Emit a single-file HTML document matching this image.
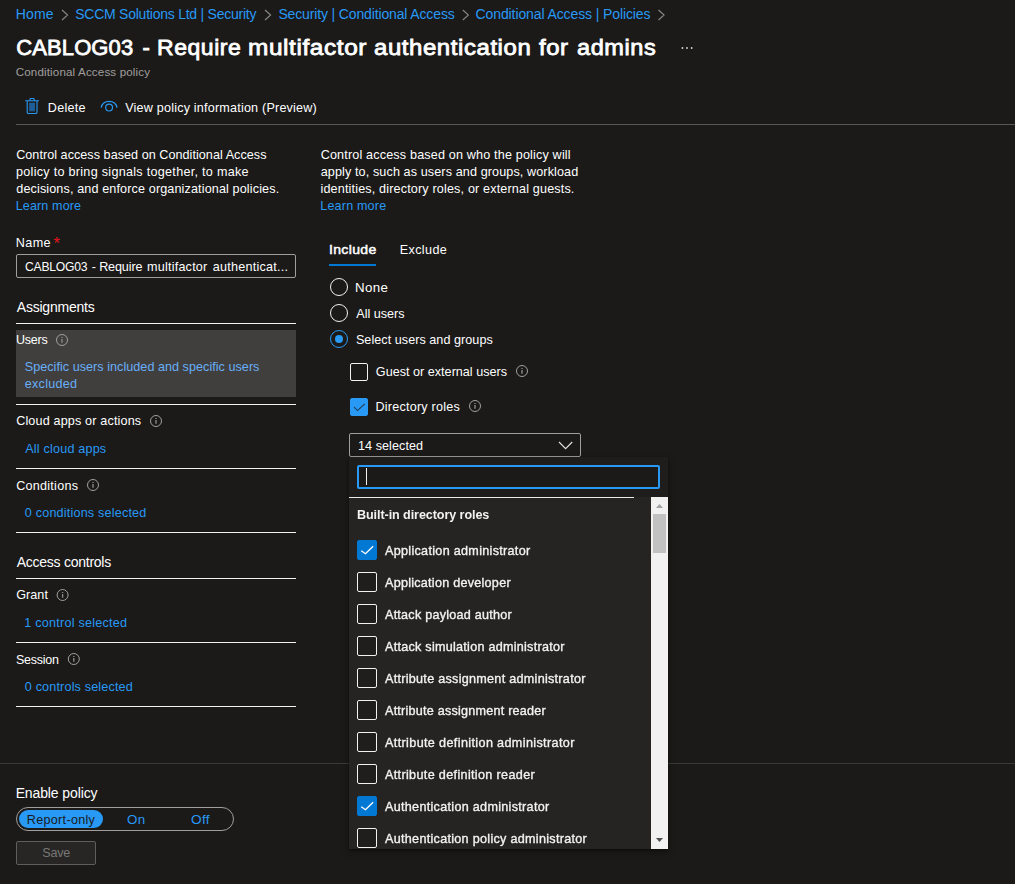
<!DOCTYPE html>
<html lang="en"><head><meta charset="utf-8"><title>Conditional Access policy</title>
<style>
html,body{margin:0;padding:0;background:#1b1a19;}
body{width:1015px;height:884px;position:relative;overflow:hidden;font-family:"Liberation Sans",sans-serif;color:#fff;}
.t{position:absolute;white-space:nowrap;z-index:5;}
.a{position:absolute;box-sizing:border-box;}
.wl{position:absolute;left:16px;width:280px;height:1px;background:#f3f2f1;}
.rad{position:absolute;box-sizing:border-box;width:18px;height:18px;border-radius:50%;border:1px solid #f3f2f1;left:330px;}
.cb{position:absolute;box-sizing:border-box;width:18px;height:18px;border-radius:2px;border:1px solid #f3f2f1;left:350px;}
.lcb{position:absolute;box-sizing:border-box;width:20px;height:20px;border-radius:2px;border:1px solid #f3f2f1;left:357px;background:#1f1e1d;}
.lcb.on{background:#0078d4;border-color:#0078d4;}
svg{position:absolute;overflow:visible;}

</style></head>
<body>
<!-- breadcrumb chevrons -->
<svg style="left:0;top:0" width="700" height="30" fill="none" stroke="#8a8886" stroke-width="1.1">
<path d="M62 10l5.600 5-5.600 5M265 10l5.600 5-5.600 5M462.800 10l5.600 5-5.600 5M658.500 10l5.600 5-5.600 5"/>
</svg>
<!-- title ellipsis -->
<svg style="left:680px;top:44px" width="16" height="8" fill="#c8c6c4"><rect x="1.700" y="3" width="1.500" height="2"/><rect x="6.250" y="3" width="1.500" height="2"/><rect x="10.900" y="3" width="1.500" height="2"/></svg>
<!-- toolbar icons -->
<svg style="left:24px;top:97px" width="17" height="18" fill="none" stroke="#2899f5" stroke-width="1.1">
<path d="M1.2 3.8h13.8M6 3.6V2.2a.7.7 0 0 1 .7-.7h2.8a.7.7 0 0 1 .7.7v1.4M3.2 4v11.2a1.3 1.3 0 0 0 1.3 1.3h7.2a1.3 1.3 0 0 0 1.3-1.3V4"/>
<rect x="5.100" y="5.700" width="5.900" height="8.600" fill="#1d5c96" stroke="none"/>
</svg>
<svg style="left:100px;top:98.500px" width="18" height="14" fill="none" stroke="#2899f5" stroke-width="1.2">
<path d="M1.2 8.6C2 4.6 5.2 2.4 9.1 2.4s7.100 2.200 7.900 6.200"/><circle cx="9.1" cy="8.600" r="3.4"/>
</svg>
<div class="a" style="left:16px;top:124px;width:999px;height:1px;background:#5a5856"></div>

<!-- name input -->
<div class="a" style="left:16px;top:254px;width:280px;height:24px;border:1px solid #a19f9d;border-radius:2px;"></div>
<!-- section lines -->
<div class="wl" style="top:323px"></div>
<div class="a" style="left:16px;top:330px;width:280px;height:67px;background:#403f3d"></div>
<div class="wl" style="top:404px"></div>
<div class="wl" style="top:468px"></div>
<div class="wl" style="top:532px"></div>
<div class="wl" style="top:578px"></div>
<div class="wl" style="top:642px"></div>
<div class="wl" style="top:706px"></div>

<!-- info icons -->
<svg style="left:0;top:0" width="600" height="700" fill="none" stroke="#a19f9d" stroke-width="1">
<g><circle cx="62" cy="340" r="5.500"/><path d="M62 337.100v.9M62 339v3.800" stroke="#8a8886" stroke-width="1.4"/></g>
<g transform="translate(94,81)"><circle cx="62" cy="340" r="5.500"/><path d="M62 337.100v.9M62 339v3.800" stroke="#8a8886" stroke-width="1.4"/></g>
<g transform="translate(31,145)"><circle cx="62" cy="340" r="5.500"/><path d="M62 337.100v.9M62 339v3.800" stroke="#8a8886" stroke-width="1.4"/></g>
<g transform="translate(0.600,255)"><circle cx="62" cy="340" r="5.500"/><path d="M62 337.100v.9M62 339v3.800" stroke="#8a8886" stroke-width="1.4"/></g>
<g transform="translate(11.800,319)"><circle cx="62" cy="340" r="5.500"/><path d="M62 337.100v.9M62 339v3.800" stroke="#8a8886" stroke-width="1.4"/></g>
<g transform="translate(460,31)"><circle cx="62" cy="340" r="5.500"/><path d="M62 337.100v.9M62 339v3.800" stroke="#8a8886" stroke-width="1.4"/></g>
<g transform="translate(413,66)"><circle cx="62" cy="340" r="5.500"/><path d="M62 337.100v.9M62 339v3.800" stroke="#8a8886" stroke-width="1.4"/></g>
</svg>

<!-- footer -->
<div class="a" style="left:0;top:763px;width:1015px;height:1px;background:#3b3a39"></div>
<div class="a" style="left:16px;top:807px;width:218px;height:24px;border:1px solid #a19f9d;border-radius:12px;"></div>
<div class="a" style="left:19px;top:810px;width:84px;height:18px;background:#2899f5;border-radius:9px;"></div>
<div class="a" style="left:16px;top:841px;width:80px;height:24px;border:1px solid #605e5c;background:#272625;border-radius:2px;"></div>

<!-- tabs -->
<div class="a" style="left:329px;top:264px;width:47px;height:2px;background:#0078d4"></div>
<!-- radios -->
<div class="rad" style="top:278px"></div>
<div class="rad" style="top:304px"></div>
<div class="rad" style="top:330px;border-color:#2899f5"></div>
<div class="a" style="left:334.800px;top:334.800px;width:8.400px;height:8.400px;border-radius:50%;background:#2899f5"></div>
<!-- checkboxes -->
<div class="cb" style="top:363px"></div>
<div class="cb" style="top:398px;background:#2899f5;border-color:#2899f5"></div>
<svg style="left:350px;top:398px" width="18" height="18" fill="none" stroke="#1b3a57" stroke-width="1.05"><path d="M4.100 9.200L7.600 12.600L14.700 5.800"/></svg>
<!-- dropdown -->
<div class="a" style="left:349px;top:433px;width:232px;height:24px;border:1px solid #a19f9d;border-radius:2px;"></div>
<svg style="left:556px;top:438px" width="20" height="14" fill="none" stroke="#e1dfdd" stroke-width="1.2"><path d="M3 4l6.600 6.600L16.200 4"/></svg>

<!-- flyout -->
<div class="a" style="left:349px;top:457px;width:319px;height:392px;background:#252423;box-shadow:0 3px 7px rgba(0,0,0,.35),0 1px 2px rgba(0,0,0,.3);"></div>
<div class="a" style="left:349px;top:457px;width:319px;height:40px;background:#1e1d1c;"></div>
<div class="a" style="left:357px;top:465px;width:303px;height:24px;border:2px solid #2899f5;border-radius:2px;background:#1b1a19"></div>
<div class="a" style="left:366px;top:468px;width:1px;height:17px;background:#f3f2f1"></div>
<div class="a" style="left:349px;top:497px;width:285px;height:1px;background:#edebe9"></div>
<!-- scrollbar -->
<div class="a" style="left:651px;top:497px;width:17px;height:352px;background:#f1f1f1"></div>
<div class="a" style="left:653px;top:514px;width:13px;height:39px;background:#c1c1c1"></div>
<svg style="left:651px;top:497px" width="17" height="352"><path d="M5 11h7l-3.500-4z" fill="#a3a3a3"/><path d="M5 341h7l-3.500 4z" fill="#505050"/></svg>
<!-- list checkboxes -->
<div class="lcb on" style="top:540px"></div>
<div class="lcb" style="top:572px"></div>
<div class="lcb" style="top:604px"></div>
<div class="lcb" style="top:636px"></div>
<div class="lcb" style="top:668px"></div>
<div class="lcb" style="top:700px"></div>
<div class="lcb" style="top:732px"></div>
<div class="lcb" style="top:764px"></div>
<div class="lcb on" style="top:796px"></div>
<div class="lcb" style="top:828px"></div>
<svg style="left:357px;top:540px" width="20" height="20" fill="none" stroke="#fff" stroke-width="1.3"><path d="M4.200 10.800l4.300 2.900 7.600-7.500"/></svg>
<svg style="left:357px;top:796px" width="20" height="20" fill="none" stroke="#fff" stroke-width="1.3"><path d="M4.200 10.800l4.300 2.900 7.600-7.500"/></svg>

<span class="t" id="t0" style="left:15.65px;top:5.00px;font-size:14px;line-height:18px;color:#2899f5;letter-spacing:0.204px;">Home</span>
<span class="t" id="t1" style="left:75.16px;top:5.00px;font-size:14px;line-height:18px;color:#2899f5;letter-spacing:-0.239px;">SCCM Solutions Ltd | Security</span>
<span class="t" id="t2" style="left:278.41px;top:5.00px;font-size:14px;line-height:18px;color:#2899f5;letter-spacing:-0.141px;">Security | Conditional Access</span>
<span class="t" id="t3" style="left:475.59px;top:5.00px;font-size:14px;line-height:18px;color:#2899f5;letter-spacing:-0.108px;">Conditional Access | Policies</span>
<span class="t" id="t4" style="left:16.28px;top:33.00px;font-size:22px;line-height:29px;letter-spacing:0.102px;-webkit-text-stroke:0.8px #fff;">CABLOG03</span>
<span class="t" id="t5" style="left:142.42px;top:33.00px;font-size:22px;line-height:29px;letter-spacing:0.000px;-webkit-text-stroke:0.8px #fff;">-</span>
<span class="t" id="t6" style="left:157.30px;top:33.00px;font-size:22px;line-height:29px;letter-spacing:0.524px;transform:scaleX(1.0448);transform-origin:0 0;-webkit-text-stroke:0.8px #fff;">Require</span>
<span class="t" id="t7" style="left:247.74px;top:33.00px;font-size:22px;line-height:29px;letter-spacing:0.524px;transform:scaleX(1.1097);transform-origin:0 0;-webkit-text-stroke:0.8px #fff;">multifactor</span>
<span class="t" id="t8" style="left:373.97px;top:33.00px;font-size:22px;line-height:29px;letter-spacing:0.524px;transform:scaleX(1.0901);transform-origin:0 0;-webkit-text-stroke:0.8px #fff;">authentication</span>
<span class="t" id="t9" style="left:539.39px;top:33.00px;font-size:22px;line-height:29px;letter-spacing:0.524px;transform:scaleX(1.0876);transform-origin:0 0;-webkit-text-stroke:0.8px #fff;">for</span>
<span class="t" id="t10" style="left:576.67px;top:33.00px;font-size:22px;line-height:29px;letter-spacing:0.524px;transform:scaleX(1.0706);transform-origin:0 0;-webkit-text-stroke:0.8px #fff;">admins</span>
<span class="t" id="t11" style="left:15.71px;top:64.00px;font-size:11.6px;line-height:15px;color:#a19f9d;letter-spacing:0.145px;">Conditional Access policy</span>
<span class="t" id="t12" style="left:47.77px;top:100.00px;font-size:12.6px;line-height:16px;letter-spacing:0.277px;">Delete</span>
<span class="t" id="t13" style="left:125.24px;top:100.00px;font-size:12.6px;line-height:16px;letter-spacing:0.196px;">View policy information (Preview)</span>
<span class="t" id="t14" style="left:16.16px;top:147.00px;font-size:12.6px;line-height:16px;letter-spacing:0.043px;">Control access based on Conditional Access</span>
<span class="t" id="t15" style="left:15.99px;top:164.00px;font-size:12.6px;line-height:16px;letter-spacing:0.284px;">policy to bring signals together, to make</span>
<span class="t" id="t16" style="left:16.27px;top:181.00px;font-size:12.6px;line-height:16px;letter-spacing:0.129px;">decisions, and enforce organizational policies.</span>
<span class="t" id="t17" style="left:15.77px;top:198.00px;font-size:12.6px;line-height:16px;color:#2899f5;letter-spacing:0.099px;">Learn more</span>
<span class="t" id="t18" style="left:320.66px;top:147.00px;font-size:12.6px;line-height:16px;letter-spacing:0.168px;">Control access based on who the policy will</span>
<span class="t" id="t19" style="left:320.76px;top:164.00px;font-size:12.6px;line-height:16px;letter-spacing:0.110px;">apply to, such as users and groups, workload</span>
<span class="t" id="t20" style="left:320.46px;top:181.00px;font-size:12.6px;line-height:16px;letter-spacing:0.160px;">identities, directory roles, or external guests.</span>
<span class="t" id="t21" style="left:320.27px;top:198.00px;font-size:12.6px;line-height:16px;color:#2899f5;letter-spacing:0.165px;">Learn more</span>
<span class="t" id="t22" style="left:15.77px;top:235.00px;font-size:12.6px;line-height:16px;letter-spacing:0.400px;">Name</span>
<span class="t" id="t23" style="left:53.60px;top:233.00px;font-size:16.5px;line-height:21px;color:#e5141e;">*</span>
<span class="t" id="t24" style="left:24.66px;top:259.00px;font-size:12.6px;line-height:16px;letter-spacing:-0.250px;transform:scaleX(0.9636);transform-origin:0 0;">CABLOG03</span>
<span class="t" id="t25" style="left:91.84px;top:259.00px;font-size:12.6px;line-height:16px;letter-spacing:0.000px;">-</span>
<span class="t" id="t26" style="left:99.17px;top:259.00px;font-size:12.6px;line-height:16px;letter-spacing:-0.136px;">Require</span>
<span class="t" id="t27" style="left:146.96px;top:259.00px;font-size:12.6px;line-height:16px;letter-spacing:0.225px;">multifactor</span>
<span class="t" id="t28" style="left:212.76px;top:259.00px;font-size:12.6px;line-height:16px;letter-spacing:0.235px;">authenticat...</span>
<span class="t" id="t29" style="left:16.77px;top:298.00px;font-size:14px;line-height:18px;letter-spacing:-0.217px;">Assignments</span>
<span class="t" id="t30" style="left:15.83px;top:332.00px;font-size:12.6px;line-height:16px;letter-spacing:-0.250px;transform:scaleX(0.9917);transform-origin:0 0;">Users</span>
<span class="t" id="t31" style="left:24.73px;top:359.00px;font-size:12.6px;line-height:16px;color:#69aef8;letter-spacing:0.039px;">Specific users included and specific users</span>
<span class="t" id="t32" style="left:24.76px;top:376.00px;font-size:12.6px;line-height:16px;color:#69aef8;letter-spacing:0.275px;">excluded</span>
<span class="t" id="t33" style="left:16.16px;top:413.00px;font-size:12.6px;line-height:16px;letter-spacing:0.159px;">Cloud apps or actions</span>
<span class="t" id="t34" style="left:25.28px;top:441.00px;font-size:12.6px;line-height:16px;color:#2899f5;letter-spacing:0.189px;">All cloud apps</span>
<span class="t" id="t35" style="left:16.16px;top:478.00px;font-size:12.6px;line-height:16px;letter-spacing:0.253px;">Conditions</span>
<span class="t" id="t36" style="left:24.81px;top:505.00px;font-size:12.6px;line-height:16px;color:#2899f5;letter-spacing:0.194px;">0 conditions selected</span>
<span class="t" id="t37" style="left:16.77px;top:553.00px;font-size:14px;line-height:18px;letter-spacing:-0.258px;">Access controls</span>
<span class="t" id="t38" style="left:16.17px;top:587.00px;font-size:12.6px;line-height:16px;letter-spacing:0.056px;">Grant</span>
<span class="t" id="t39" style="left:24.34px;top:615.00px;font-size:12.6px;line-height:16px;color:#2899f5;letter-spacing:0.238px;">1 control selected</span>
<span class="t" id="t40" style="left:16.23px;top:652.00px;font-size:12.6px;line-height:16px;letter-spacing:-0.250px;transform:scaleX(0.9903);transform-origin:0 0;">Session</span>
<span class="t" id="t41" style="left:24.81px;top:679.00px;font-size:12.6px;line-height:16px;color:#2899f5;letter-spacing:0.166px;">0 controls selected</span>
<span class="t" id="t42" style="left:15.65px;top:784.00px;font-size:14px;line-height:18px;letter-spacing:-0.117px;">Enable policy</span>
<span class="t" id="t43" style="left:26.77px;top:812.00px;font-size:12.6px;line-height:16px;color:#1b1a19;letter-spacing:0.305px;">Report-only</span>
<span class="t" id="t44" style="left:127.10px;top:812.00px;font-size:12.6px;line-height:16px;color:#2899f5;letter-spacing:0.300px;transform:scaleX(1.0586);transform-origin:0 0;">On</span>
<span class="t" id="t45" style="left:190.80px;top:812.00px;font-size:12.6px;line-height:16px;color:#2899f5;letter-spacing:0.300px;transform:scaleX(1.0815);transform-origin:0 0;">Off</span>
<span class="t" id="t46" style="left:42.23px;top:845.00px;font-size:12.6px;line-height:16px;color:#797775;letter-spacing:-0.229px;">Save</span>
<span class="t" id="t47" style="left:328.56px;top:242.00px;font-size:12.6px;line-height:16px;letter-spacing:0.300px;transform:scaleX(1.1143);transform-origin:0 0;-webkit-text-stroke:0.45px #fff;">Include</span>
<span class="t" id="t48" style="left:399.67px;top:242.00px;font-size:12.6px;line-height:16px;letter-spacing:0.397px;">Exclude</span>
<span class="t" id="t49" style="left:355.47px;top:280.00px;font-size:12.6px;line-height:16px;letter-spacing:0.300px;transform:scaleX(1.0575);transform-origin:0 0;">None</span>
<span class="t" id="t50" style="left:356.28px;top:306.00px;font-size:12.6px;line-height:16px;letter-spacing:-0.015px;">All users</span>
<span class="t" id="t51" style="left:355.93px;top:332.00px;font-size:12.6px;line-height:16px;letter-spacing:0.045px;">Select users and groups</span>
<span class="t" id="t52" style="left:375.87px;top:364.00px;font-size:12.6px;line-height:16px;letter-spacing:0.013px;">Guest or external users</span>
<span class="t" id="t53" style="left:375.47px;top:399.00px;font-size:12.6px;line-height:16px;letter-spacing:0.222px;">Directory roles</span>
<span class="t" id="t54" style="left:358.04px;top:438.00px;font-size:12.6px;line-height:16px;letter-spacing:0.055px;">14 selected</span>
<span class="t" id="t55" style="left:356.56px;top:507.00px;font-size:12.6px;line-height:16px;color:#f3f2f1;font-weight:700;letter-spacing:-0.087px;will-change:transform;">Built-in directory roles</span>
<span class="t" id="t56" style="left:385.15px;top:543.00px;font-size:12.6px;line-height:16px;color:#f3f2f1;letter-spacing:0.303px;-webkit-text-stroke:0.35px #f3f2f1;will-change:transform;">Application administrator</span>
<span class="t" id="t57" style="left:385.15px;top:575.00px;font-size:12.6px;line-height:16px;color:#f3f2f1;letter-spacing:0.258px;-webkit-text-stroke:0.35px #f3f2f1;will-change:transform;">Application developer</span>
<span class="t" id="t58" style="left:385.15px;top:607.00px;font-size:12.6px;line-height:16px;color:#f3f2f1;letter-spacing:0.238px;-webkit-text-stroke:0.35px #f3f2f1;will-change:transform;">Attack payload author</span>
<span class="t" id="t59" style="left:385.15px;top:639.00px;font-size:12.6px;line-height:16px;color:#f3f2f1;letter-spacing:0.263px;-webkit-text-stroke:0.35px #f3f2f1;will-change:transform;">Attack simulation administrator</span>
<span class="t" id="t60" style="left:385.15px;top:671.00px;font-size:12.6px;line-height:16px;color:#f3f2f1;letter-spacing:0.282px;-webkit-text-stroke:0.35px #f3f2f1;will-change:transform;">Attribute assignment administrator</span>
<span class="t" id="t61" style="left:385.15px;top:703.00px;font-size:12.6px;line-height:16px;color:#f3f2f1;letter-spacing:0.233px;-webkit-text-stroke:0.35px #f3f2f1;will-change:transform;">Attribute assignment reader</span>
<span class="t" id="t62" style="left:385.15px;top:735.00px;font-size:12.6px;line-height:16px;color:#f3f2f1;letter-spacing:0.372px;-webkit-text-stroke:0.35px #f3f2f1;will-change:transform;">Attribute definition administrator</span>
<span class="t" id="t63" style="left:385.15px;top:767.00px;font-size:12.6px;line-height:16px;color:#f3f2f1;letter-spacing:0.345px;-webkit-text-stroke:0.35px #f3f2f1;will-change:transform;">Attribute definition reader</span>
<span class="t" id="t64" style="left:385.15px;top:799.00px;font-size:12.6px;line-height:16px;color:#f3f2f1;letter-spacing:0.299px;-webkit-text-stroke:0.35px #f3f2f1;will-change:transform;">Authentication administrator</span>
<span class="t" id="t65" style="left:385.15px;top:831.00px;font-size:12.6px;line-height:16px;color:#f3f2f1;letter-spacing:0.293px;-webkit-text-stroke:0.35px #f3f2f1;will-change:transform;">Authentication policy administrator</span>
</body></html>
